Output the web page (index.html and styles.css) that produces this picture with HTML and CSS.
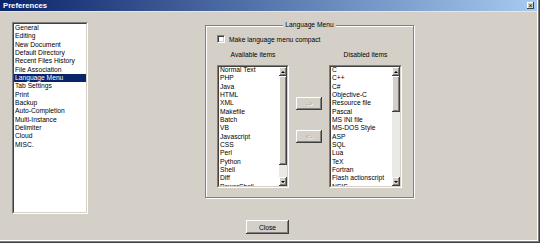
FILE: index.html
```html
<!DOCTYPE html>
<html lang="en">
<head>
    <meta charset="UTF-8">
    <title>Preferences</title>
    <link rel="stylesheet" href="styles.css">
</head>
<body>
    <div class="window">
        <div class="titlebar">
            <span class="title">Preferences</span>
            <span class="title-close">&#215;</span>
        </div>
        <div class="panes">
            <div class="sunken nav-list">
                <div class="sunken-inner">
                    <div class="item">General</div>
                    <div class="item">Editing</div>
                    <div class="item">New Document</div>
                    <div class="item">Default Directory</div>
                    <div class="item">Recent Files History</div>
                    <div class="item">File Association</div>
                    <div class="item selected">Language Menu</div>
                    <div class="item">Tab Settings</div>
                    <div class="item">Print</div>
                    <div class="item">Backup</div>
                    <div class="item">Auto-Completion</div>
                    <div class="item">Multi-Instance</div>
                    <div class="item">Delimiter</div>
                    <div class="item">Cloud</div>
                    <div class="item">MISC.</div>
                </div>
            </div>
            <div class="group">
                <span class="legend">Language Menu</span>
                <label class="check-row">
                    <span class="checkbox"></span>
                    <span>Make language menu compact</span>
                </label>
                <div class="columns">
                    <div class="col col-left">
                        <div class="col-label">Available items</div>
                        <div class="sunken listbox">
                            <div class="sunken-inner list-wrap">
                                <div class="list-items">
                                    <div class="item">Normal Text</div>
                                    <div class="item">PHP</div>
                                    <div class="item">Java</div>
                                    <div class="item">HTML</div>
                                    <div class="item">XML</div>
                                    <div class="item">Makefile</div>
                                    <div class="item">Batch</div>
                                    <div class="item">VB</div>
                                    <div class="item">Javascript</div>
                                    <div class="item">CSS</div>
                                    <div class="item">Perl</div>
                                    <div class="item">Python</div>
                                    <div class="item">Shell</div>
                                    <div class="item">Diff</div>
                                    <div class="item">PowerShell</div>
                                </div>
                                <div class="scrollbar">
                                    <div class="sb-btn"><span class="arrow-up"></span></div>
                                    <div class="sb-track">
                                        <div class="sb-thumb thumb-long"></div>
                                    </div>
                                    <div class="sb-btn"><span class="arrow-down"></span></div>
                                </div>
                            </div>
                        </div>
                    </div>
                    <div class="mid">
                        <button class="btn move-btn">-&gt;</button>
                        <button class="btn move-btn">&lt;-</button>
                    </div>
                    <div class="col col-right">
                        <div class="col-label">Disabled items</div>
                        <div class="sunken listbox">
                            <div class="sunken-inner list-wrap">
                                <div class="list-items">
                                    <div class="item">C</div>
                                    <div class="item">C++</div>
                                    <div class="item">C#</div>
                                    <div class="item">Objective-C</div>
                                    <div class="item">Resource file</div>
                                    <div class="item">Pascal</div>
                                    <div class="item">MS INI file</div>
                                    <div class="item">MS-DOS Style</div>
                                    <div class="item">ASP</div>
                                    <div class="item">SQL</div>
                                    <div class="item">Lua</div>
                                    <div class="item">TeX</div>
                                    <div class="item">Fortran</div>
                                    <div class="item">Flash actionscript</div>
                                    <div class="item">NSIS</div>
                                </div>
                                <div class="scrollbar">
                                    <div class="sb-btn"><span class="arrow-up"></span></div>
                                    <div class="sb-track">
                                        <div class="sb-thumb thumb-short"></div>
                                    </div>
                                    <div class="sb-btn"><span class="arrow-down"></span></div>
                                </div>
                            </div>
                        </div>
                    </div>
                </div>
            </div>
        </div>
        <div class="footer">
            <button class="btn close-btn">Close</button>
        </div>
    </div>
</body>
</html>
```

FILE: styles.css
```css
body {
    margin: 0;
    padding: 0;
    background: #404040;
    font-family: "Liberation Sans", Arial, sans-serif;
    font-size: 6.7px;
    color: #000;
}
.window {
    width: 540px;
    height: 243px;
    box-sizing: border-box;
    background: #d4d0c8;
    display: flex;
    flex-direction: column;
    box-shadow: inset -1px -1px #404040, inset -2px -2px #808080, inset -3px -3px #fff;
}
.titlebar {
    height: 11px;
    margin-right: 3px;
    background: linear-gradient(to right, #0a246a, #a6caf0);
    display: flex;
    align-items: center;
    justify-content: space-between;
    padding: 0 3px 0 3px;
    border-bottom: 1px solid #e8e6e0;
}
.title {
    color: #fff;
    font-weight: bold;
    font-size: 7.7px;
}
.title-close {
    width: 7px;
    height: 7px;
    background: #d4d0c8;
    font-size: 7px;
    line-height: 7px;
    text-align: center;
    color: #000;
    box-shadow: inset -1px -1px #404040, inset 1px 1px #fff;
}
.panes {
    display: flex;
    align-items: flex-start;
    padding: 10px 0 0 12px;
}
.sunken {
    box-sizing: border-box;
    border: 1px solid;
    border-color: #808080 #fff #fff #808080;
}
.sunken-inner {
    box-sizing: border-box;
    height: 100%;
    border: 1px solid;
    border-color: #404040 #d4d0c8 #d4d0c8 #404040;
    background: #fff;
    overflow: hidden;
}
.item {
    line-height: 8.33px;
    height: 8.33px;
    padding-left: 1px;
    white-space: nowrap;
}
.nav-list {
    width: 76px;
    height: 192px;
}
.nav-list .sunken-inner {
    padding-top: 0;
}
.item.selected {
    background: #0a246a;
    color: #fff;
}
.group {
    position: relative;
    box-sizing: border-box;
    margin: 3px 0 0 117px;
    width: 209px;
    height: 173px;
    border: 1px solid #808080;
    box-shadow: 1px 1px 0 #fff, inset 1px 1px 0 #fff;
    padding: 9px 0 0 11px;
}
.legend {
    position: absolute;
    top: -5px;
    left: 0;
    right: 0;
    margin: 0 auto;
    width: max-content;
    padding: 0 2px;
    background: #d4d0c8;
    line-height: 8px;
}
.check-row {
    display: flex;
    align-items: center;
    gap: 4px;
    height: 8px;
}
.checkbox {
    width: 8px;
    height: 8px;
    box-sizing: border-box;
    background: #fff;
    border: 1px solid;
    border-color: #808080 #fff #fff #808080;
    box-shadow: inset 1px 1px #404040, inset -1px -1px #d4d0c8;
}
.columns {
    display: flex;
    margin-top: 8px;
}
.col-left {
    width: 72px;
}
.col-right {
    width: 73px;
}
.col-label {
    height: 8px;
    line-height: 8px;
    text-align: center;
    margin-bottom: 6px;
}
.listbox {
    height: 123px;
}
.list-wrap {
    display: flex;
}
.list-items {
    flex: 1;
    overflow: hidden;
    margin-top: -1px;
}
.scrollbar {
    width: 8px;
    display: flex;
    flex-direction: column;
}
.sb-btn {
    height: 9px;
    box-sizing: border-box;
    background: #d4d0c8;
    box-shadow: inset -1px -1px #404040, inset 1px 1px #fff, inset -2px -2px #808080;
    display: flex;
    align-items: center;
    justify-content: center;
}
.arrow-up {
    border-left: 2px solid transparent;
    border-right: 2px solid transparent;
    border-bottom: 2px solid #000;
}
.arrow-down {
    border-left: 2px solid transparent;
    border-right: 2px solid transparent;
    border-top: 2px solid #000;
}
.sb-track {
    flex: 1;
    background: #ebe9e5;
}
.sb-thumb {
    background: #d4d0c8;
    box-shadow: inset -1px -1px #404040, inset 1px 1px #fff, inset -2px -2px #808080;
}
.thumb-long {
    height: 89px;
}
.thumb-short {
    height: 36px;
}
.mid {
    width: 26px;
    margin: 0 7px;
    padding-top: 46px;
    display: flex;
    flex-direction: column;
    gap: 20px;
}
.btn {
    font-family: "Liberation Sans", Arial, sans-serif;
    font-size: 6.7px;
    background: #d4d0c8;
    border: none;
    padding: 0;
    box-shadow: inset -1px -1px #404040, inset 1px 1px #fff, inset -2px -2px #808080;
}
.move-btn {
    height: 13px;
    color: #a8a49c;
    text-shadow: 1px 1px 0 #fff;
}
.footer {
    display: flex;
    justify-content: center;
    padding: 6px 5px 0 0;
}
.close-btn {
    width: 43px;
    height: 14px;
    color: #000;
}
```
